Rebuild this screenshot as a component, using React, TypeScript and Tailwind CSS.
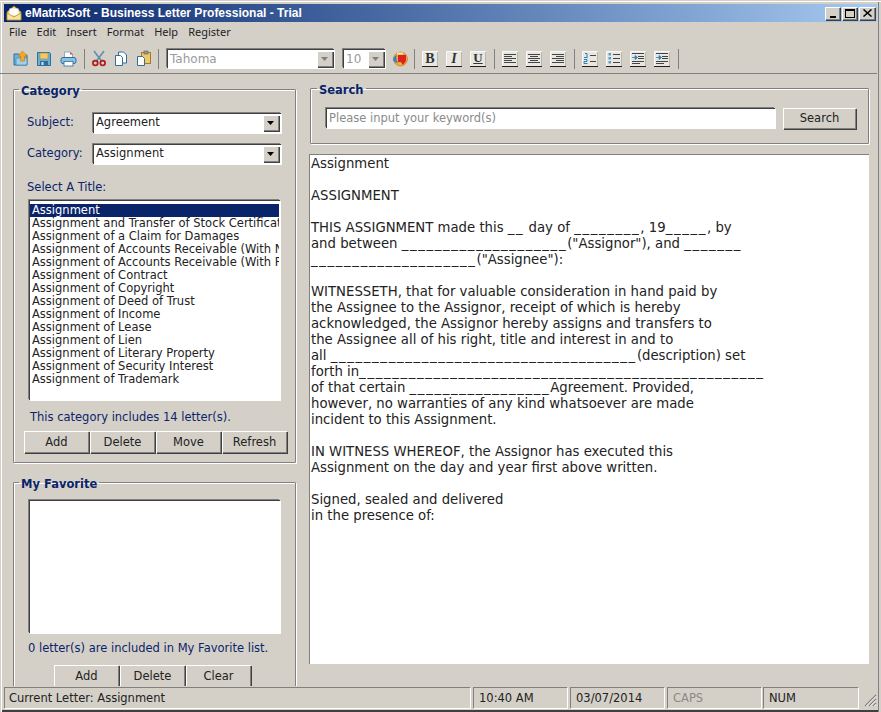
import React from "react";

const raised = "bg-[#d4d0c8] shadow-[inset_1px_1px_0_#ffffff,inset_-1px_-1px_0_#808080,1px_1px_0_#404040]";
const sunken = "bg-white shadow-[inset_1px_1px_0_#404040,-1px_-1px_0_#808080,1px_1px_0_#ffffff,0_0_0_1px_#d4d0c8]";
const group = "border border-[#808080] shadow-[inset_1px_1px_0_#ffffff,1px_1px_0_#ffffff] rounded-[1px]";
const legend = "px-[2px] h-[14px] text-[11.5px] font-bold text-[#0a246a] leading-[18px]";
const verdana = "font-['DejaVu_Sans',sans-serif]";

const titles = [
  "Assignment",
  "Assignment and Transfer of Stock Certificate",
  "Assignment of a Claim for Damages",
  "Assignment of Accounts Receivable (With Notice)",
  "Assignment of Accounts Receivable (With Recourse)",
  "Assignment of Contract",
  "Assignment of Copyright",
  "Assignment of Deed of Trust",
  "Assignment of Income",
  "Assignment of Lease",
  "Assignment of Lien",
  "Assignment of Literary Property",
  "Assignment of Security Interest",
  "Assignment of Trademark",
];

function U({ n }: { n: number }) {
  return <span className="tracking-[1.65px]">{"_".repeat(n)}</span>;
}

function OpenIcon() {
  return (
    <svg width="16" height="17" viewBox="0 0 16 17">
      <path d="M1 4h5l1 1h7v10H1z" fill="#6fb4dc" stroke="#2a6f9e" />
      <path d="M3 15V8h11v7z" fill="#9ed0ea" stroke="#3b86b5" strokeWidth="0.7" />
      <path d="M9.5 1 14 6h-2.5v5h-4V6H5z" fill="#f5a623" stroke="#c87a10" strokeWidth="0.6" />
    </svg>
  );
}
function SaveIcon() {
  return (
    <svg width="16" height="16" viewBox="0 0 16 16">
      <path d="M1.5 1.5h12l1 1v12h-13z" fill="#6cafd6" stroke="#2d6f9c" />
      <rect x="4" y="2" width="8" height="6" fill="#f0c96a" stroke="#a88a3a" strokeWidth="0.6" />
      <rect x="4" y="10" width="8" height="4.5" fill="#2d6f9c" />
      <rect x="5.5" y="11" width="2" height="3" fill="#d8e8f2" />
    </svg>
  );
}
function PrintIcon() {
  return (
    <svg width="17" height="16" viewBox="0 0 17 16">
      <path d="M4.5 1h6l2 2v4h-8z" fill="#fff" stroke="#7c9bb5" strokeWidth="0.8" />
      <path d="M10 1l3 2.5h-3z" fill="#d8433a" />
      <rect x="1" y="6.5" width="15" height="6" rx="2" fill="#8cc0e2" stroke="#2d6f9c" />
      <rect x="4" y="10.5" width="9" height="4.5" fill="#fff" stroke="#2d6f9c" strokeWidth="0.8" />
    </svg>
  );
}
function CutIcon() {
  return (
    <svg width="14" height="17" viewBox="0 0 14 17">
      <path d="M2 1l7.5 10M12 1 4.5 11" stroke="#5c8fb5" strokeWidth="1.6" fill="none" />
      <circle cx="3.3" cy="13" r="2.4" fill="none" stroke="#b01c1c" strokeWidth="1.7" />
      <circle cx="10.7" cy="13" r="2.4" fill="none" stroke="#b01c1c" strokeWidth="1.7" />
    </svg>
  );
}
function CopyIcon() {
  return (
    <svg width="14" height="16" viewBox="0 0 14 16">
      <path d="M4.5 1h5l3 3v8h-8z" fill="#fff" stroke="#2f6f9b" />
      <path d="M1.5 4.5h5l2 2v8h-7z" fill="#fff" stroke="#2f6f9b" />
    </svg>
  );
}
function PasteIcon() {
  return (
    <svg width="16" height="17" viewBox="0 0 16 17">
      <rect x="5.5" y="2.5" width="9" height="11" fill="#eec868" stroke="#9c7d30" />
      <rect x="8" y="1" width="4" height="3" fill="#9a9a8c" stroke="#5d5d52" strokeWidth="0.6" />
      <path d="M1.5 6.5h5l2 2v7h-7z" fill="#fff" stroke="#2f6f9b" />
    </svg>
  );
}
function ColorIcon() {
  return (
    <svg width="16" height="16" viewBox="0 0 16 16">
      <circle cx="8.5" cy="8" r="7" fill="#f2a93b" stroke="#b9772a" strokeWidth="0.6" />
      <path d="M6 4h8v6l-3 4-2-3H6z" fill="#d8241c" />
      <path d="M1 9c0-3 2-4 4-5-1 2-1 5 1 8-2 0-4-1-5-3z" fill="#3f7fc0" />
      <path d="M5 1.5h6v2H5z" fill="#f6e3b0" />
    </svg>
  );
}

function FmtBtn({ children }: { children: React.ReactNode }) {
  return (
    <div className="w-[16px] h-[16px] bg-[#e9e7e1] border-b border-b-[#222] shadow-[inset_1px_1px_0_#f8f8f6,inset_-1px_0_0_#b9b6ae] flex items-center justify-center">
      {children}
    </div>
  );
}
function Lines({ kind }: { kind: "left" | "center" | "right" }) {
  const r = [
    [2, 14],
    [kind === "left" ? 2 : kind === "center" ? 4 : 6, kind === "left" ? 10 : kind === "center" ? 12 : 14],
    [2, 14],
    [kind === "left" ? 2 : kind === "center" ? 4 : 6, kind === "left" ? 10 : kind === "center" ? 12 : 14],
    [2, 14],
  ];
  return (
    <svg width="16" height="15" viewBox="0 0 16 15">
      {r.map(([a, b], i) => (
        <path key={i} d={`M${a} ${3.5 + i * 2}H${b}`} stroke="#444" strokeWidth="1" />
      ))}
    </svg>
  );
}
function NumList() {
  return (
    <svg width="16" height="15" viewBox="0 0 16 15">
      <path d="M3 2.5h2v4M2 6.5h3.5M2 8.5h3v2H2v2h3.5" stroke="#2f7fb5" strokeWidth="1" fill="none" />
      <path d="M8 4.5h6M8 10.5h6" stroke="#444" />
    </svg>
  );
}
function BulList() {
  return (
    <svg width="16" height="15" viewBox="0 0 16 15">
      {[3, 7, 11].map((y) => (
        <React.Fragment key={y}>
          <rect x="2.5" y={y - 1} width="2.5" height="2.5" fill="#5d9cc5" />
          <path d={`M7 ${y + 0.5}h7`} stroke="#444" />
        </React.Fragment>
      ))}
    </svg>
  );
}
function Indent() {
  return (
    <svg width="16" height="15" viewBox="0 0 16 15">
      <path d="M2 2.5h12M8 5.5h6M8 7.5h6M2 10.5h12M2 12.5h8" stroke="#444" />
      <path d="M2 6.5h3V4.5l2.5 2-2.5 2v-2" fill="#2f7fb5" stroke="#2f7fb5" strokeWidth="0.8" />
    </svg>
  );
}
function Sep({ className }: { className: string }) {
  return <div className={`w-px h-[20px] bg-[#808080] ${className}`} />;
}

function ComboArrow({ disabled }: { disabled?: boolean }) {
  return (
    <div className={`${raised} w-[16px] h-[16px] flex items-center justify-center shrink-0`}>
      <svg width="8" height="4" viewBox="0 0 8 4">
        <path d="M0 0h7L3.5 4z" fill={disabled ? "#808080" : "#000"} />
      </svg>
    </div>
  );
}

function Btn({ children, className }: { children: string; className: string }) {
  return (
    <div className={`${raised} ${verdana} flex items-center justify-center pt-[1px] text-[11.5px] text-[#222] ${className}`}>
      {children}
    </div>
  );
}

export default function App() {
  return (
    <div className="w-[881px] h-[712px] overflow-hidden bg-[#d4d0c8] flex flex-col shadow-[inset_0_1px_0_#d4d0c8,inset_0_2px_0_#ffffff,inset_1px_0_0_#d4d0c8,inset_2px_0_0_#ffffff,inset_-2px_0_0_#d4d0c8,inset_-3px_0_0_#808080,inset_0_-2px_0_#404040] relative font-['Noto_Sans',sans-serif]">
      {/* title bar */}
      <div className="mt-[4px] mx-[4px] h-[18px] shrink-0 flex items-center bg-gradient-to-r from-[#0a246a] to-[#a6caf0] text-white">
        <svg width="16" height="16" viewBox="0 0 16 16" className="ml-[2px] shrink-0">
          <path d="M1 7 8 1l7 6v8H1z" fill="#f5d36d" stroke="#a98428" strokeWidth="0.7" />
          <rect x="3.5" y="3.5" width="9" height="7" fill="#fff" />
          <path d="M1 8l7 4 7-4v7H1z" fill="#f7e3a0" stroke="#a98428" strokeWidth="0.7" />
        </svg>
        <span className="ml-[3px] text-[12px] font-bold font-['Liberation_Sans',sans-serif] whitespace-nowrap">eMatrixSoft - Business Letter Professional - Trial</span>
        <div className="ml-auto mr-[2px] flex">
          <div className={`${raised} w-[15px] h-[13px] flex items-end justify-center pb-[2px] text-black`}>
            <div className="w-[6px] h-[2px] bg-black" />
          </div>
          <div className={`${raised} w-[15px] h-[13px] ml-[2px] flex items-center justify-center`}>
            <div className="w-[10px] h-[9px] border border-black border-t-2" />
          </div>
          <div className={`${raised} w-[16px] h-[13px] ml-[2px] flex items-center justify-center`}>
            <svg width="9" height="8" viewBox="0 0 9 8">
              <path d="M0.5 0.5 8.5 7.5M8.5 0.5 0.5 7.5" stroke="#000" strokeWidth="1.5" />
            </svg>
          </div>
        </div>
      </div>

      {/* menu */}
      <div className="h-[20px] shrink-0 flex items-center pl-[9px] text-[11px] text-[#222] gap-[10px]">
        <span>File</span>
        <span>Edit</span>
        <span>Insert</span>
        <span>Format</span>
        <span>Help</span>
        <span>Register</span>
      </div>

      {/* toolbar */}
      <div className="h-[32px] shrink-0 mr-[4px] border-b border-b-[#808080] flex items-center pl-[13px] pt-[2px]">
        <OpenIcon />
        <div className="ml-[7px]"><SaveIcon /></div>
        <div className="ml-[8px]"><PrintIcon /></div>
        <Sep className="ml-[7px]" />
        <div className="ml-[7px]"><CutIcon /></div>
        <div className="ml-[8px]"><CopyIcon /></div>
        <div className="ml-[8px]"><PasteIcon /></div>
        <Sep className="ml-[6px]" />
        <div className={`${sunken} ml-[8px] w-[167px] h-[19px] flex items-center justify-between pr-[1px] pl-[3px] text-[12px] text-[#9a9a9a] ${verdana}`}>
          <span>Tahoma</span>
          <ComboArrow disabled />
        </div>
        <div className={`${sunken} ml-[9px] w-[42px] h-[19px] flex items-center justify-between pr-[1px] pl-[3px] text-[12px] text-[#9a9a9a] ${verdana}`}>
          <span>10</span>
          <ComboArrow disabled />
        </div>
        <div className="ml-[7px]"><ColorIcon /></div>
        <Sep className="ml-[6px]" />
        <div className="ml-[7px]"><FmtBtn><span className="font-['Liberation_Serif',serif] font-bold text-[14px] text-[#333]">B</span></FmtBtn></div>
        <div className="ml-[8px]"><FmtBtn><span className="font-['Liberation_Serif',serif] italic font-bold text-[14px] text-[#333]">I</span></FmtBtn></div>
        <div className="ml-[8px]"><FmtBtn><span className="font-['Liberation_Serif',serif] underline font-bold text-[13px] text-[#333]">U</span></FmtBtn></div>
        <Sep className="ml-[8px]" />
        <div className="ml-[7px]"><FmtBtn><Lines kind="left" /></FmtBtn></div>
        <div className="ml-[8px]"><FmtBtn><Lines kind="center" /></FmtBtn></div>
        <div className="ml-[8px]"><FmtBtn><Lines kind="right" /></FmtBtn></div>
        <Sep className="ml-[8px]" />
        <div className="ml-[7px]"><FmtBtn><NumList /></FmtBtn></div>
        <div className="ml-[8px]"><FmtBtn><BulList /></FmtBtn></div>
        <div className="ml-[8px]"><FmtBtn><Indent /></FmtBtn></div>
        <div className="ml-[8px]"><FmtBtn><Indent /></FmtBtn></div>
        <Sep className="ml-[8px]" />
      </div>

      {/* body */}
      <div className={`h-[612px] shrink-0 overflow-hidden flex items-start pl-[13px] ${verdana}`}>
        <div className="w-[283px] shrink-0 pt-[8px]">
          <fieldset className={`${group} h-[381px] pl-[13px] pr-[8px]`}>
            <legend className={`${legend} -ml-[8px]`}>Category</legend>
            <div className="flex items-center h-[20px] mt-[17px]">
              <span className="w-[66px] text-[11.5px] text-[#0a246a]">Subject:</span>
              <div className={`${sunken} w-[188px] h-[20px] flex items-center justify-between pl-[3px] pr-[2px] text-[11.5px] text-[#222]`}>
                <span>Agreement</span>
                <ComboArrow />
              </div>
            </div>
            <div className="flex items-center h-[20px] mt-[11px]">
              <span className="w-[66px] text-[11.5px] text-[#0a246a]">Category:</span>
              <div className={`${sunken} w-[188px] h-[20px] flex items-center justify-between pl-[3px] pr-[2px] text-[11.5px] text-[#222]`}>
                <span>Assignment</span>
                <ComboArrow />
              </div>
            </div>
            <div className="mt-[16px] h-[14px] leading-[14px] text-[11.5px] text-[#0a246a]">Select A Title:</div>
            <div className={`${sunken} mt-[6px] ml-[2px] w-[251px] h-[200px] px-[1px] pt-[4px] overflow-hidden`}>
              {titles.map((t, i) => (
                <div
                  key={t}
                  className={`h-[13px] leading-[13px] px-[2px] text-[11.5px] whitespace-nowrap overflow-hidden ${i === 0 ? "bg-[#0a246a] text-white" : "text-[#222]"}`}
                >
                  {t}
                </div>
              ))}
            </div>
            <div className="mt-[10px] ml-[3px] h-[14px] leading-[14px] text-[11.5px] text-[#0a246a]">This category includes 14 letter(s).</div>
            <div className="mt-[7px] -ml-[3px] flex gap-px">
              <Btn className="w-[65px] h-[22px]">Add</Btn>
              <Btn className="w-[65px] h-[22px]">Delete</Btn>
              <Btn className="w-[65px] h-[22px]">Move</Btn>
              <Btn className="w-[65px] h-[22px]">Refresh</Btn>
            </div>
          </fieldset>

          <fieldset className={`${group} mt-[12px] h-[260px] pl-[14px] pr-[8px]`}>
            <legend className={`${legend} -ml-[9px]`}>My Favorite</legend>
            <div className={`${sunken} mt-[11px] ml-[1px] w-[251px] h-[133px]`} />
            <div className="mt-[8px] h-[14px] leading-[14px] text-[11.5px] text-[#0a246a] whitespace-nowrap">0 letter(s) are included in My Favorite list.</div>
            <div className="mt-[10px] ml-[26px] flex gap-px">
              <Btn className="w-[65px] h-[22px]">Add</Btn>
              <Btn className="w-[65px] h-[22px]">Delete</Btn>
              <Btn className="w-[65px] h-[22px]">Clear</Btn>
            </div>
          </fieldset>
        </div>

        <div className="w-[560px] ml-[13px] shrink-0 pt-[7px]">
          <fieldset className={`${group} ml-[1px] w-[559px] h-[63px] pl-[15px] pr-[12px]`}>
            <legend className={`${legend} -ml-[9px]`}>Search</legend>
            <div className="flex items-start mt-[13px]">
              <div className={`${sunken} w-[449px] h-[20px] flex items-center pl-[3px] pt-[1px] text-[11.5px] text-[#8a8a8a]`}>Please input your keyword(s)</div>
              <Btn className="ml-[8px] w-[73px] h-[21px]">Search</Btn>
            </div>
          </fieldset>
          <div className="mt-[10px] h-[510px] bg-white border-t border-l border-t-[#808080] border-l-[#808080] pl-[1px] pt-[1px] text-[13.25px] leading-[16px] text-[#222] whitespace-pre overflow-hidden">
            <div>Assignment</div>
            <div>&nbsp;</div>
            <div>ASSIGNMENT</div>
            <div>&nbsp;</div>
            <div>THIS ASSIGNMENT made this <U n={2} /> day of <U n={8} />, 19<U n={5} />, by</div>
            <div>and between <U n={20} />("Assignor"), and <U n={7} /></div>
            <div><U n={20} />("Assignee"):</div>
            <div>&nbsp;</div>
            <div>WITNESSETH, that for valuable consideration in hand paid by</div>
            <div>the Assignee to the Assignor, receipt of which is hereby</div>
            <div>acknowledged, the Assignor hereby assigns and transfers to</div>
            <div>the Assignee all of his right, title and interest in and to</div>
            <div>all <U n={37} />(description) set</div>
            <div>forth in<U n={49} /></div>
            <div>of that certain <U n={17} />Agreement. Provided,</div>
            <div>however, no warranties of any kind whatsoever are made</div>
            <div>incident to this Assignment.</div>
            <div>&nbsp;</div>
            <div>IN WITNESS WHEREOF, the Assignor has executed this</div>
            <div>Assignment on the day and year first above written.</div>
            <div>&nbsp;</div>
            <div>Signed, sealed and delivered</div>
            <div>in the presence of:</div>
          </div>
        </div>
      </div>

      {/* status bar */}
      <div className={`h-[21px] mt-[1px] shrink-0 flex pl-[4px] text-[11.5px] text-[#222] ${verdana}`}>
        <div className="w-[466px] border-t border-l border-[#808080] shadow-[1px_1px_0_#fff] flex items-center pl-[4px] pt-[1px]">Current Letter: Assignment</div>
        <div className="ml-[3px] w-[94px] border-t border-l border-[#808080] shadow-[1px_1px_0_#fff] flex items-center pl-[5px] pt-[1px]">10:40 AM</div>
        <div className="ml-[3px] w-[94px] border-t border-l border-[#808080] shadow-[1px_1px_0_#fff] flex items-center pl-[5px] pt-[1px]">03/07/2014</div>
        <div className="ml-[3px] w-[94px] border-t border-l border-[#808080] shadow-[1px_1px_0_#fff] flex items-center pl-[5px] pt-[1px] text-[#8a8a8a]">CAPS</div>
        <div className="ml-[2px] w-[95px] border-t border-l border-[#808080] shadow-[1px_1px_0_#fff] flex items-center pl-[5px] pt-[1px]">NUM</div>
        <svg width="14" height="14" viewBox="0 0 14 14" className="ml-[5px] mt-[6px]">
          <path d="M13 2 2 13M13 6 6 13M13 10l-3 3" stroke="#808080" strokeWidth="1.2" />
          <path d="M13 3.3 3.3 13M13 7.3 7.3 13M13 11.3 11.3 13" stroke="#fff" strokeWidth="0.8" />
        </svg>
      </div>
    </div>
  );
}
